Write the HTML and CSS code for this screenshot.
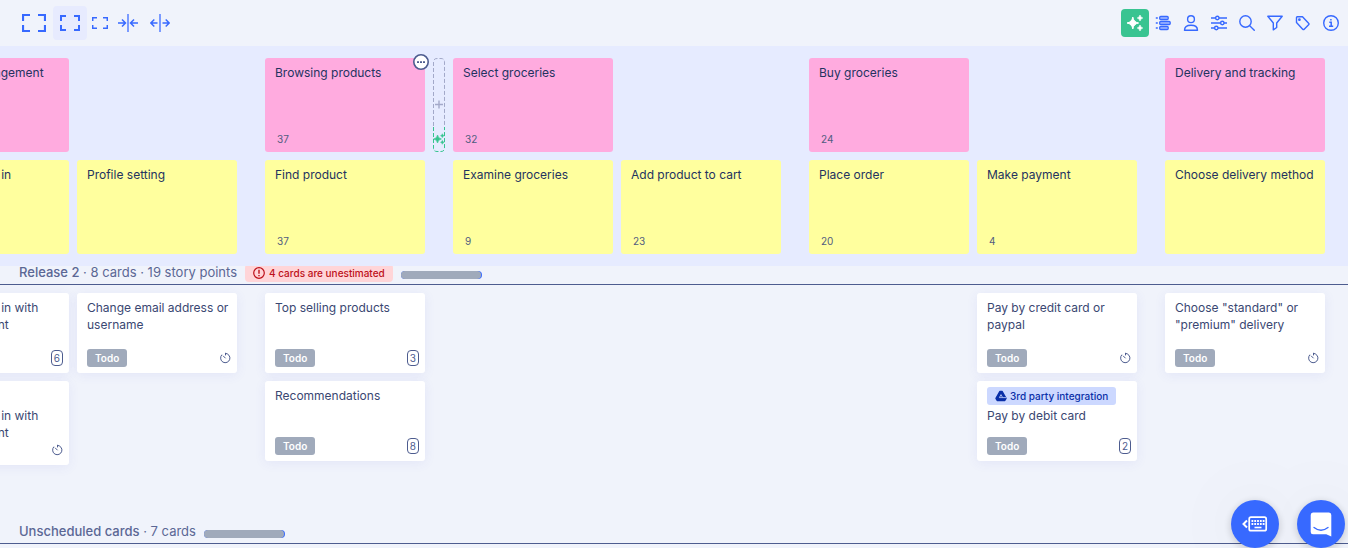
FILE: index.html
```html
<!DOCTYPE html>
<html lang="en">
<head>
<meta charset="utf-8">
<title>Story map</title>
<link rel="stylesheet" href="styles.css">
</head>
<body>
<svg class="defs" width="0" height="0" aria-hidden="true">
  <symbol id="timer" viewBox="0 0 12 12"><path d="M6.500 1.300V3M6.500 1.300A4.700 4.700 0 1 1 2.600 3M4.300 4l2 2" fill="none" stroke="currentColor" stroke-width="1" stroke-linecap="round"/></symbol>
  <symbol id="sparkles" viewBox="0 0 18 18"><path d="M6.800 3Q7.600 8.200 12.600 9 7.600 9.800 6.800 15 6 9.800 1 9 6 8.200 6.800 3Z" stroke="currentColor" stroke-width="1" stroke-linejoin="round"/><path d="M14 1Q14.400 3.400 16.800 4 14.400 4.600 14 7 13.600 4.600 11.200 4 13.600 3.400 14 1ZM14 11Q14.400 13.400 16.800 14 14.400 14.600 14 17 13.600 14.600 11.200 14 13.600 13.400 14 11Z" stroke="currentColor" stroke-width=".6" stroke-linejoin="round"/></symbol>
</svg>
<header class="toolbar">
  <div class="tools">
    <button class="tool size-l" aria-label="Large cards"><svg width="24" height="18" viewBox="0 0 24 18"><path d="M1 7V1h7M16 1h7v6M23 11v6h-7M8 17H1v-6" stroke-width="2.200"/></svg></button>
    <button class="tool size-m active" aria-label="Medium cards"><svg width="20" height="16" viewBox="0 0 20 16"><path d="M1 6V1h5M14 1h5v5M19 10v5h-5M6 15H1v-5" stroke-width="2"/></svg></button>
    <button class="tool size-s" aria-label="Small cards"><svg width="16" height="12" viewBox="0 0 16 12"><path d="M.7 4V.7H5M11 .7h4.300V4M15.300 8v3.300H11M5 11.300H.7V8" stroke-width="1.500"/></svg></button>
    <button class="tool collapse" aria-label="Collapse columns"><svg width="20" height="18" viewBox="0 0 20 18"><path d="M10 0v18" stroke="#7b9bff" stroke-width="2"/><path d="M0 9h7M4 5.500 7.500 9 4 12.500M20 9h-7M16 5.500 12.500 9l3.500 3.500" stroke-width="1.500"/></svg></button>
    <button class="tool expand" aria-label="Expand columns"><svg width="20" height="18" viewBox="0 0 20 18"><path d="M10 0v18" stroke="#7b9bff" stroke-width="2"/><path d="M7.500 9H.7M4.300 5.500.8 9l3.500 3.500M12.500 9h6.800M15.700 5.500 19.200 9l-3.500 3.500" stroke-width="1.500"/></svg></button>
  </div>
  <div class="tools">
    <button class="icon ai" aria-label="AI assistant"><svg width="18" height="18" fill="currentColor"><use href="#sparkles"/></svg></button>
    <button class="icon" aria-label="Outline"><svg width="16" height="16" viewBox="0 0 16 16"><g stroke-width="1.300"><rect x="4.700" y="1.500" width="8.500" height="3" rx="1" fill="#a9bdff"/><rect x="4.700" y="6.500" width="10.500" height="3" rx="1" fill="#a9bdff"/><rect x="4.700" y="11.500" width="8.500" height="3" rx="1" fill="#a9bdff"/></g><path d="M.8 3h2M.8 8h2M.8 13h2" stroke-width="1.700"/></svg></button>
    <button class="icon" aria-label="Personas"><svg width="16" height="16" viewBox="0 0 16 16"><circle cx="8" cy="4.200" r="3.400"/><path d="M1.500 15.200c0-3.400 2.200-5 6.500-5s6.500 1.600 6.500 5Z" stroke-linejoin="round"/></svg></button>
    <button class="icon" aria-label="Settings"><svg width="16" height="16" viewBox="0 0 16 16"><path d="M0 3h4.500M8 3h8M0 8h9.500M13 8h3M0 13h3.500M7 13h9"/><circle cx="6.300" cy="3" r="1.700"/><circle cx="11.300" cy="8" r="1.700"/><circle cx="5.300" cy="13" r="1.700"/></svg></button>
    <button class="icon" aria-label="Search"><svg width="16" height="16" viewBox="0 0 16 16"><circle cx="6.500" cy="6.500" r="5.700"/><path d="m10.700 10.700 5 5"/></svg></button>
    <button class="icon" aria-label="Filter"><svg width="16" height="16" viewBox="0 0 16 16"><path d="M.8 1.200h14.400L9.700 8v4.500l-3.400 2.300V8Z" stroke-linejoin="round"/></svg></button>
    <button class="icon" aria-label="Labels"><svg width="16" height="16" viewBox="0 0 16 16"><path d="M1.500 2.500v5l6.200 6.700q.8.700 1.500 0l4.400-4.400q.8-.8 0-1.500L7.500 1.700H2.300q-.8 0-.8.800Z" stroke-linejoin="round"/><circle cx="4.400" cy="4.700" r=".7"/></svg></button>
    <button class="icon" aria-label="Information"><svg width="16" height="16" viewBox="0 0 16 16"><circle cx="8" cy="8" r="7.300"/><path d="M6.300 7.200h1.900v4M6 11.300h4.200M7.900 3.900v1.500" stroke-width="1.500"/></svg></button>
  </div>
</header>

<main class="board">
  <section class="backbone">
    <div class="groups">
      <div class="group">
        <article class="note pink"><h2>Account management</h2></article>
        <div class="steps">
          <article class="note yellow"><h3>Sign up or log in</h3></article>
          <article class="note yellow"><h3>Profile setting</h3></article>
        </div>
      </div>
      <div class="group">
        <article class="note pink"><h2>Browsing products</h2><span class="count">37</span>
          <button class="more" aria-label="More actions"><svg width="16" height="16" viewBox="0 0 16 16"><circle cx="8" cy="8" r="7.200" fill="#fff" stroke="#4d5c8f" stroke-width="1.600"/><path d="M4 7.200h2v1.700H4zM7 7.200h2v1.700H7zM10 7.200h2v1.700h-2z" fill="#4d5c8f"/></svg></button>
          <button class="insert" aria-label="Insert activity"><svg width="12" height="94" viewBox="0 0 12 94"><path d="M.5 68V4Q.5.500 4 .5h4Q11.500.500 11.500 4v64" fill="none" stroke="#a3a9c9" stroke-dasharray="4 2"/><path d="M.5 69v21q0 3.500 3.500 3.500h4q3.500 0 3.500-3.500V69" fill="none" stroke="#36c48f" stroke-dasharray="4 2"/><path d="M6 42.500v8M2 46.500h8" stroke="#a3a9c9" stroke-width="1.400"/><use href="#sparkles" x="0" y="75" width="12" height="12" fill="#36c48f" color="#36c48f"/></svg></button>
        </article>
        <div class="steps"><article class="note yellow"><h3>Find product</h3><span class="count">37</span></article></div>
      </div>
      <div class="group">
        <article class="note pink"><h2>Select groceries</h2><span class="count">32</span></article>
        <div class="steps">
          <article class="note yellow"><h3>Examine groceries</h3><span class="count">9</span></article>
          <article class="note yellow"><h3>Add product to cart</h3><span class="count">23</span></article>
        </div>
      </div>
      <div class="group">
        <article class="note pink"><h2>Buy groceries</h2><span class="count">24</span></article>
        <div class="steps">
          <article class="note yellow"><h3>Place order</h3><span class="count">20</span></article>
          <article class="note yellow"><h3>Make payment</h3><span class="count">4</span></article>
        </div>
      </div>
      <div class="group">
        <article class="note pink"><h2>Delivery and tracking</h2></article>
        <div class="steps"><article class="note yellow"><h3>Choose delivery method</h3></article></div>
      </div>
    </div>
  </section>

  <section class="release">
    <header class="release-head">
      <p><strong>Release 2</strong> · 8 cards · 19 story points</p>
      <span class="warning"><svg width="12" height="12" viewBox="0 0 12 12" fill="none" stroke="currentColor"><circle cx="6" cy="6" r="5.300" stroke-width="1.200"/><path d="M6 2.800v3.900M6 7.900v1.400" stroke-width="1.400"/></svg>4 cards are unestimated</span>
      <div class="progress"><div class="todo"></div></div>
    </header>
    <div class="groups stories">
      <div class="steps">
        <div class="column">
          <article class="card"><p>Sign up or log in with Google account</p><footer><span class="status">Todo</span><span class="points">6</span></footer></article>
          <article class="card"><span class="label">Social</span><p>Sign up or log in with Google account</p><footer><span class="status">Todo</span><svg class="timer"><use href="#timer"/></svg></footer></article>
        </div>
        <div class="column">
          <article class="card"><p>Change email address or username</p><footer><span class="status">Todo</span><svg class="timer"><use href="#timer"/></svg></footer></article>
        </div>
      </div>
      <div class="column">
        <article class="card"><p>Top selling products</p><footer><span class="status">Todo</span><span class="points">3</span></footer></article>
        <article class="card"><p>Recommendations</p><footer><span class="status">Todo</span><span class="points">8</span></footer></article>
      </div>
      <div class="steps"><div class="column"></div><div class="column"></div></div>
      <div class="steps">
        <div class="column"></div>
        <div class="column">
          <article class="card"><p>Pay by credit card or paypal</p><footer><span class="status">Todo</span><svg class="timer"><use href="#timer"/></svg></footer></article>
          <article class="card"><span class="label"><svg width="12" height="12" viewBox="0 0 12 12"><path d="M4.800 1.500h2.400l3.800 6.800-1.200 2.200H2.200L1 8.300Z" fill="currentColor" stroke="currentColor" stroke-width="1.400" stroke-linejoin="round"/><path d="m6 4.600 1.600 3H4.400ZM7.600 7.600H11" fill="none" stroke="#ccd8ff" stroke-width=".8"/></svg>3rd party integration</span><p>Pay by debit card</p><footer><span class="status">Todo</span><span class="points">2</span></footer></article>
        </div>
      </div>
      <div class="column">
        <article class="card"><p>Choose "standard" or "premium" delivery</p><footer><span class="status">Todo</span><svg class="timer"><use href="#timer"/></svg></footer></article>
      </div>
    </div>
  </section>

  <section class="release">
    <header class="release-head">
      <p><strong>Unscheduled cards</strong> · 7 cards</p>
      <div class="progress"><div class="todo"></div></div>
    </header>
  </section>
</main>

<div class="floating">
  <button class="fab" aria-label="Keyboard shortcuts"><svg width="26" height="16" viewBox="0 0 26 16" fill="none" stroke="#fff"><path d="M5 4.500 1.500 8 5 11.500" stroke-width="2"/><rect x="7.200" y="1.200" width="17" height="13.500" rx="1.800" stroke-width="1.700"/><path d="M9.500 5h13M9.500 8h13" stroke-width="1.900" stroke-dasharray="1.800 1"/><path d="M12.500 11.500h7" stroke-width="1.600"/></svg></button>
  <button class="fab" aria-label="Open chat"><svg width="22" height="25" viewBox="0 0 22 25"><path d="M3 .5h16q2.300 0 2.300 2.500v21.500l-5-2.200H3q-2.300 0-2.300-2.300V3Q.7.500 3 .5Z" fill="#fff"/><path d="M4 15.500q7 5.500 14 0" fill="none" stroke="#3769ff" stroke-width="1.300" stroke-linecap="round"/></svg></button>
</div>
</body>
</html>
```
FILE: styles.css
```css
* { box-sizing: border-box; }
body {
  margin: 0;
  height: 100vh;
  overflow: hidden;
  background: #f0f3fb;
  color: #3a4772;
  font: 12px/17px Inter, "Liberation Sans", sans-serif;
}
h2, h3, p { margin: 0; font-size: inherit; font-weight: 400; }
button { border: 0; padding: 0; background: none; font: inherit; cursor: pointer; }
.defs { position: absolute; }

.toolbar {
  display: flex;
  justify-content: space-between;
  height: 46px;
  padding: 0 3px 0 18px;
}
.tools { display: flex; align-items: center; }
.tool, .icon {
  display: flex;
  align-items: center;
  justify-content: center;
  color: #3769ff;
}
.tool { height: 34px; }
.tool svg, .icon svg { stroke: currentColor; fill: none; }
.icon svg { stroke-width: 1.4px; }
.size-l { width: 32px; margin-right: 3px; }
.size-m { width: 34px; }
.size-s { width: 26px; }
.collapse { width: 30px; }
.expand { width: 34px; }
.active { border-radius: 4px; background: #e7ebfe; }
.icon { width: 28px; height: 28px; }
.icon.ai { border-radius: 4px; background: #39c491; color: #fff; }
.icon.ai svg { fill: currentColor; stroke: none; }

.backbone { position: relative; z-index: 1; padding: 12px 0; background: #e6ebff; }
.groups { display: flex; gap: 28px; margin-left: -91px; }
.group, .column { display: flex; flex-direction: column; gap: 8px; }
.steps { display: flex; gap: 8px; flex: none; }
.group { flex: none; }
.column { width: 160px; flex: none; }

.note {
  position: relative;
  display: flex;
  flex-direction: column;
  justify-content: space-between;
  width: 160px;
  height: 94px;
  padding: 6px 10px 4px;
  border-radius: 3px;
  color: #24335f;
}
.pink { background: #ffabdf; }
.yellow { background: #ffff9e; }
.count { padding-left: 2px; font-size: 10px; color: #515c80; }
.more { position: absolute; top: -4px; right: -4px; width: 16px; height: 16px; }
.insert { position: absolute; top: 0; left: 168px; width: 12px; height: 94px; }
.more svg, .insert svg { display: block; }

.release-head {
  display: flex;
  align-items: flex-end;
  gap: 8px;
  height: 19px;
  padding: 0 19px 2px;
  border-bottom: 1px solid #4d5c8f;
  color: #5b6795;
  font-size: 13px;
}
.release-head p { padding-bottom: 1px; }
.release-head strong { font-weight: 500; }
.warning {
  display: flex;
  align-items: center;
  gap: 4px;
  flex: none;
  height: 18px;
  padding: 0 8px;
  border-radius: 4px;
  background: #ffd5d8;
  color: #bd1019;
  font-size: 10px;
  font-weight: 500;
}
.progress {
  width: 81px;
  height: 8px;
  margin-bottom: 3px;
  border-radius: 4px;
  background: #3769ff;
}
.todo { width: 80px; height: 8px; border-radius: 4px; background: #a0aabb; }
.stories { min-height: 240px; padding-top: 8px; }

.card {
  display: flex;
  flex-direction: column;
  align-items: flex-start;
  min-height: 80px;
  padding: 6px 6px 6px 10px;
  border-radius: 3px;
  background: #fff;
  box-shadow: 0 2px 12px #5050d014;
}
.card footer {
  display: flex;
  align-items: center;
  justify-content: space-between;
  width: 100%;
  margin-top: auto;
}
.status, .label {
  display: flex;
  align-items: center;
  gap: 3px;
  height: 18px;
  padding: 0 8px;
  border-radius: 3px;
  font-size: 10px;
  font-weight: 500;
}
.status { background: #a0aabb; color: #fff; font-weight: 600; }
.label { margin-bottom: 2px; background: #ccd8ff; color: #0a2fa8; }
.points {
  height: 16px;
  padding: 0 2px;
  border: 1px solid #4d5c8f;
  border-radius: 4px;
  font-size: 10px;
  line-height: 14px;
  color: #4d5c8f;
}
.timer { width: 12px; height: 12px; color: #4d5c8f; }

.floating {
  position: fixed;
  z-index: 2;
  right: 3px;
  bottom: 0;
  display: flex;
  gap: 18px;
}
.fab {
  display: flex;
  align-items: center;
  justify-content: center;
  width: 48px;
  height: 48px;
  border-radius: 50%;
  background: #3769ff;
  box-shadow: 0 2px 8px #0003, 0 0 80px #00000012;
}
```
